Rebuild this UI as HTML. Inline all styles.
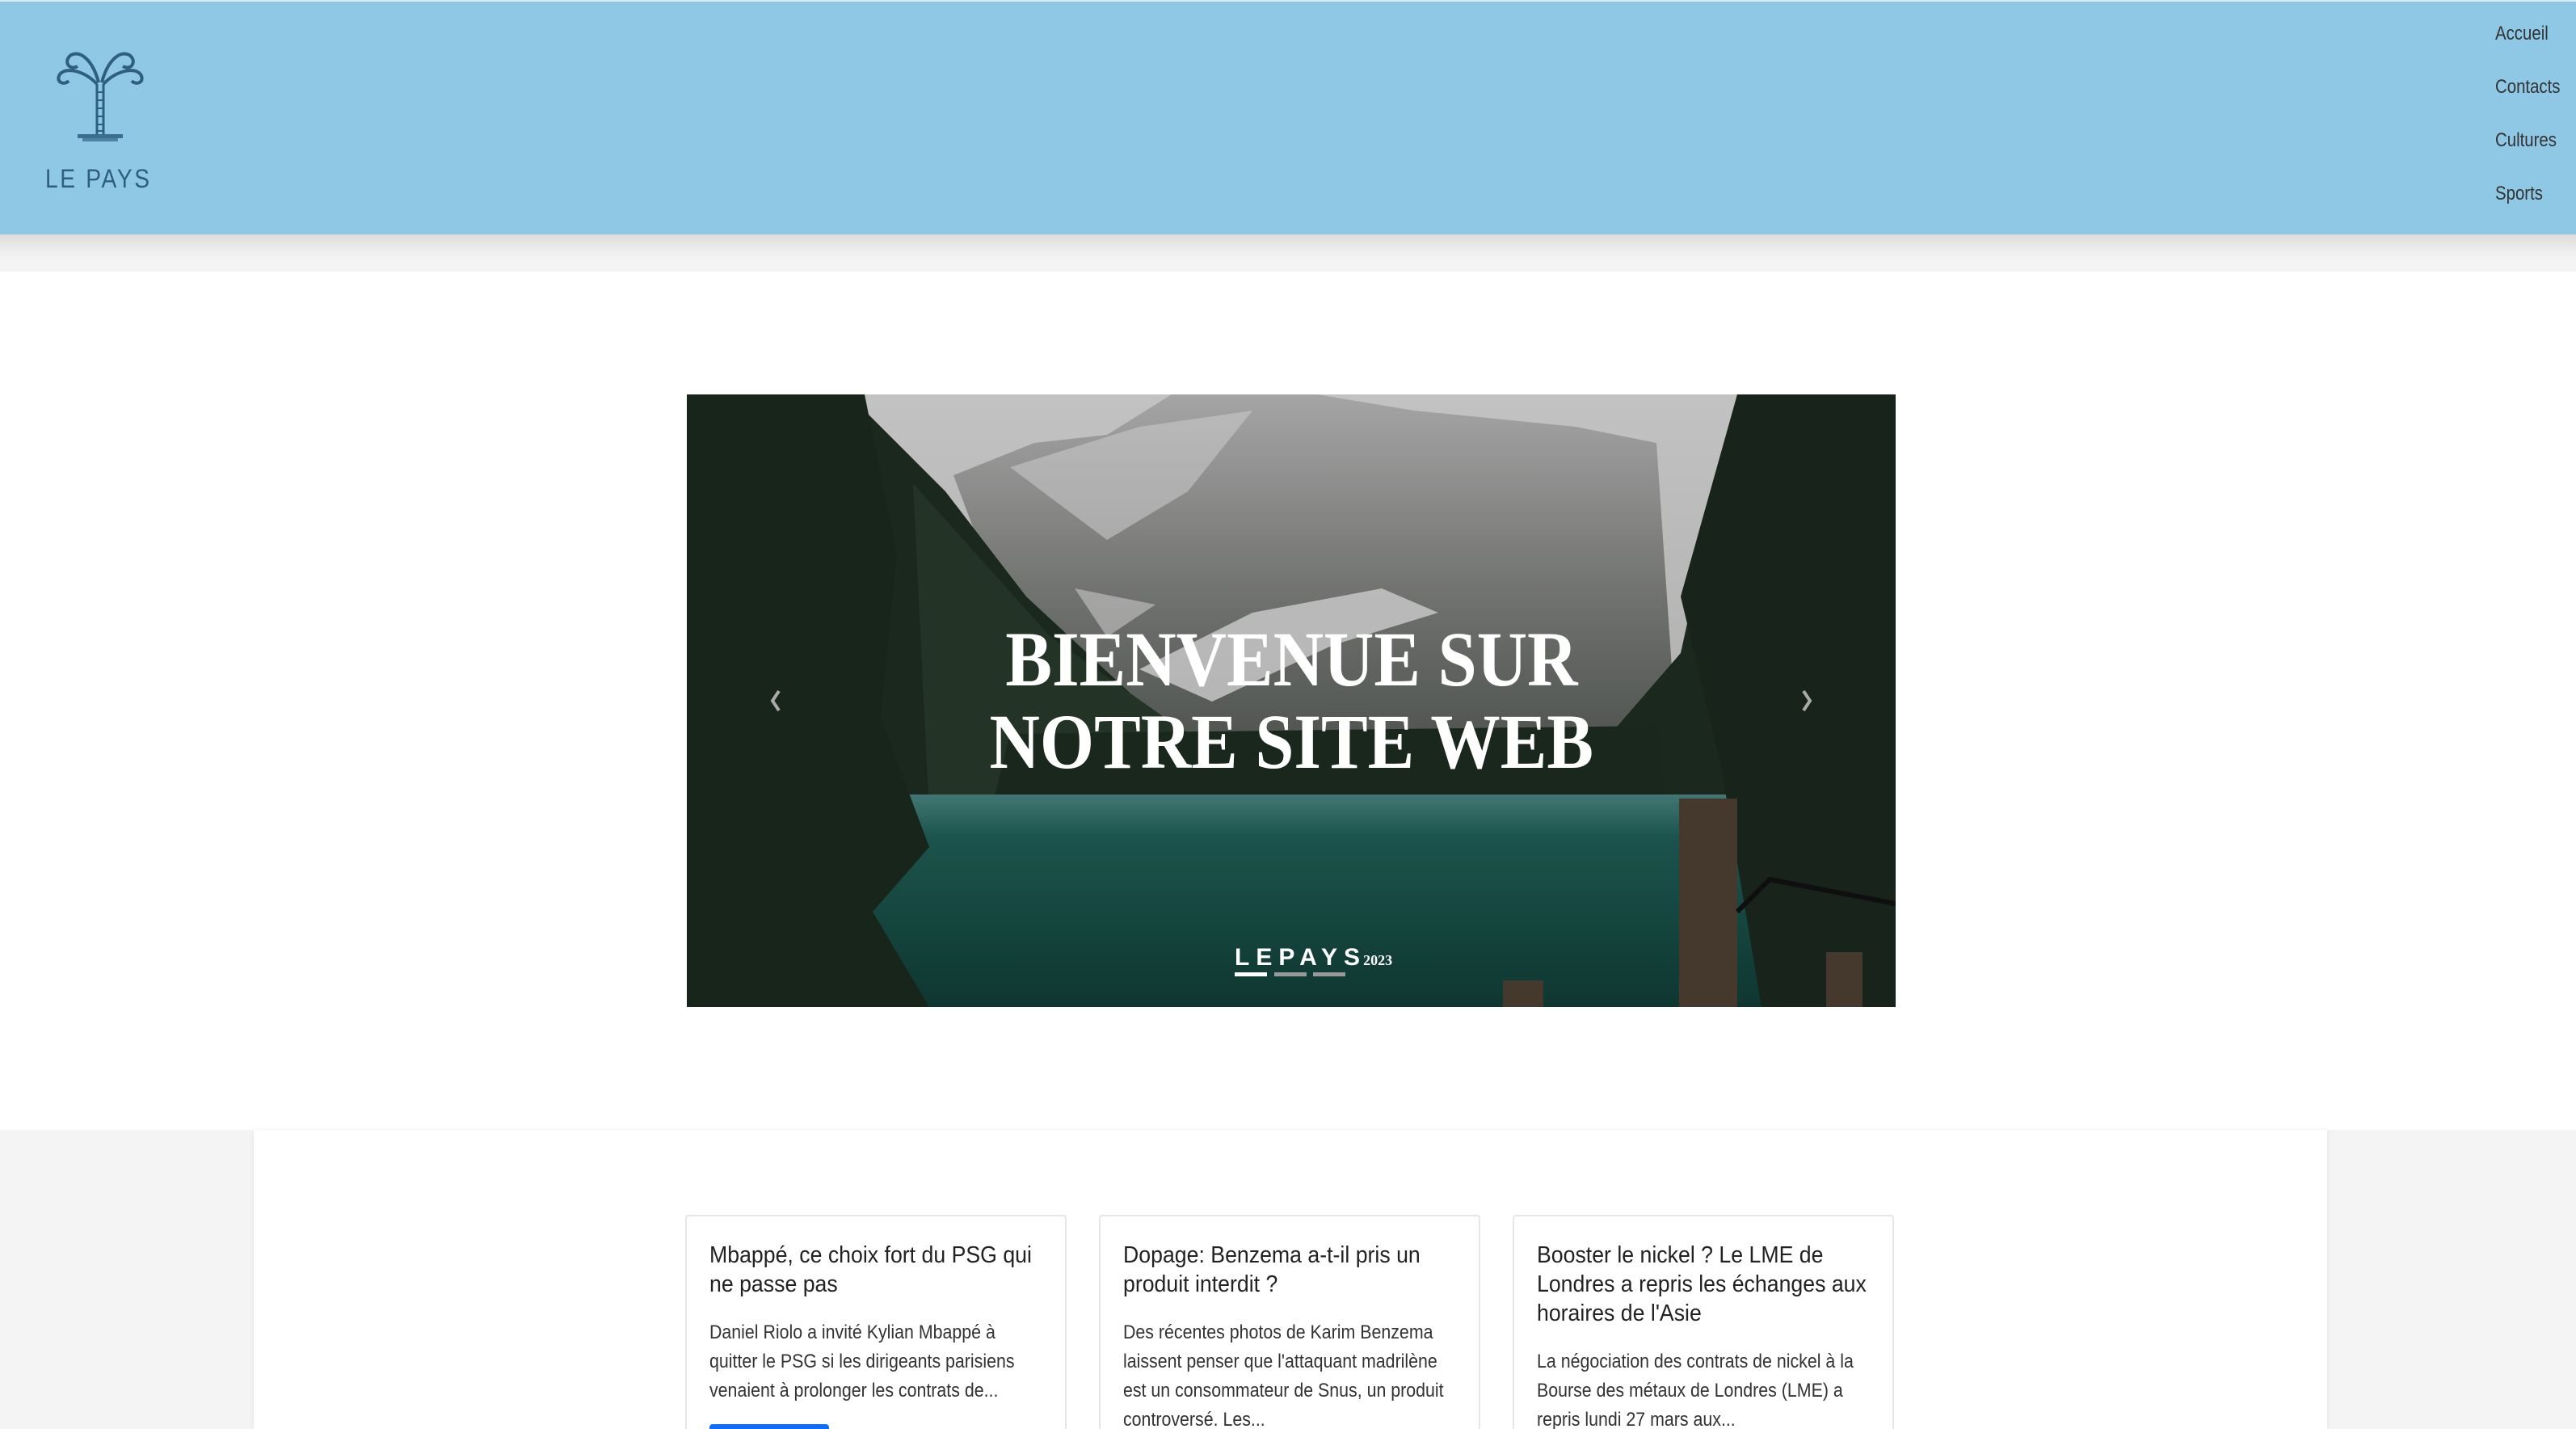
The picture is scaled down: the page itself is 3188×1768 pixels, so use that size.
<!DOCTYPE html>
<html style="overflow:hidden;height:1768px"><head><meta charset="utf-8"><style>
*{margin:0;padding:0;box-sizing:border-box}
body{width:3188px;height:1768px;overflow:hidden;background:#fff;font-family:"Liberation Sans",sans-serif;position:relative}
.hdr{position:absolute;left:0;top:0;width:3188px;height:290px;background:#8fc8e5;border-top:2px solid #d8ecf6}
.band{position:absolute;left:0;top:290px;width:3188px;height:46px;background:linear-gradient(#dcdcdc,#f3f3f3 60%,#f4f4f4)}
.nav{position:absolute;left:3088px;font-size:24px;color:#333;transform:scaleX(.85);transform-origin:left}
.logo-t{position:absolute;left:56px;top:203px;font-size:32px;letter-spacing:3px;color:#2f5f7d;transform:scaleX(.88);transform-origin:left}
.hero{position:absolute;left:850px;top:488px;width:1496px;height:758px;overflow:hidden;background:#2a3a30}
.t{position:absolute;left:0;width:1496px;text-align:center;color:#fff;font-family:"Liberation Serif",serif;font-weight:bold;font-size:96px;line-height:100px}
.t span{display:inline-block;transform:scaleX(.9)}
.grey{position:absolute;left:0;top:1398px;width:3188px;height:370px;background:#f4f4f4}
.cont{position:absolute;left:314px;top:1398px;width:2566px;height:370px;background:#fff;box-shadow:0 0 6px rgba(0,0,0,.08)}
.card{position:absolute;top:1503px;width:472px;height:265px;border:2px solid #e6e6e6;border-bottom:none;border-radius:4px 4px 0 0;background:#fff}
.in{position:absolute;left:28px;top:30px;color:#222;white-space:nowrap}
.ti{font-size:29px;line-height:36px;color:#222;transform:scaleX(.92);transform-origin:left top}
.bd{font-size:24px;line-height:36px;margin-top:24px;color:#333;transform:scaleX(.89);transform-origin:left top}
</style></head><body>
<div class="hdr"></div>
<div class="band"></div>
<svg style="position:absolute;left:60px;top:50px" width="130" height="135" viewBox="0 0 130 135">
<g fill="none" stroke="#2f5f7d" stroke-width="4">
<path d="M62 52 C55 25 40 12 28 18 C18 25 25 38 36 32"/>
<path d="M66 52 C73 25 88 12 100 18 C110 25 103 38 92 32"/>
<path d="M60 54 C45 38 22 32 14 42 C8 52 20 56 25 50"/>
<path d="M68 54 C83 38 106 32 114 42 C120 52 108 56 103 50"/>
<path d="M60 54 L60 118 M68 54 L68 118" stroke-width="3"/>
<path d="M60 64H68M60 74H68M60 84H68M60 94H68M60 104H68M60 112H68" stroke-width="2"/>
</g>
<rect x="36" y="116" width="56" height="5" fill="#3b6e8f"/>
<rect x="42" y="121" width="44" height="4" fill="#4d82a3"/>
</svg>
<div class="logo-t">LE PAYS</div>
<div class="nav" style="top:28px">Accueil</div>
<div class="nav" style="top:94px">Contacts</div>
<div class="nav" style="top:160px">Cultures</div>
<div class="nav" style="top:226px">Sports</div>

<div class="hero">
<svg width="1496" height="758" viewBox="0 0 1496 758" preserveAspectRatio="none" style="position:absolute;left:0;top:0">
<defs>
<linearGradient id="sky" x1="0" y1="0" x2="0" y2="1"><stop offset="0" stop-color="#d8d8d8"/><stop offset="1" stop-color="#b5b6b4"/></linearGradient>
<linearGradient id="lake" x1="0" y1="0" x2="0" y2="1"><stop offset="0" stop-color="#4a8580"/><stop offset=".2" stop-color="#1f5e56"/><stop offset="1" stop-color="#113d36"/></linearGradient>
<linearGradient id="mt" x1="0" y1="0" x2="0" y2="1"><stop offset="0" stop-color="#b8b8b8"/><stop offset=".5" stop-color="#7d7f7c"/><stop offset="1" stop-color="#4c514c"/></linearGradient>
</defs>
<rect width="1496" height="758" fill="url(#sky)"/>
<path d="M330 100 L430 60 L520 50 L600 0 L780 0 L900 20 L1000 30 L1100 40 L1200 60 L1230 500 L480 500 Z" fill="url(#mt)"/>
<path d="M400 90 L560 40 L700 20 L620 120 L520 180Z" fill="#e0e0e0" opacity=".6"/>
<path d="M560 340 L700 270 L860 240 L930 270 L800 310 L650 380Z" fill="#e4e4e4" opacity=".8"/>
<path d="M480 240 L580 260 L520 300Z" fill="#ddd" opacity=".6"/>
<path d="M200 0 L320 120 L420 250 L560 380 L700 470 L1100 470 L1230 320 L1300 0 L1496 0 L1496 758 L0 758 L0 0Z" fill="#1e2d22"/>
<path d="M280 110 L450 300 L620 420 L720 480 L300 520Z" fill="#27392b"/>
<path d="M400 420 L1200 410 L1210 500 L380 500Z" fill="#1c2c20"/>
<rect x="0" y="495" width="1496" height="263" fill="url(#lake)"/>
<path d="M0 0 L220 0 L260 200 L240 400 L300 560 L230 640 L300 758 L0 758Z" fill="#1b2a1f"/>
<path d="M1496 0 L1300 0 L1230 250 L1280 460 L1330 758 L1496 758Z" fill="#1a281f"/>
<rect x="1228" y="500" width="72" height="258" fill="#4d4033"/>
<rect x="1010" y="725" width="50" height="33" fill="#4d4033"/>
<rect x="1410" y="690" width="45" height="68" fill="#4d4033"/>
<path d="M1300 640 L1340 600 L1496 630" stroke="#111" stroke-width="6" fill="none"/>
<rect x="0" y="0" width="1496" height="758" fill="#000" opacity=".1"/>
</svg>
<div class="t" style="top:278px"><span>BIENVENUE SUR</span></div>
<div class="t" style="top:380px"><span>NOTRE SITE WEB</span></div>
<svg style="position:absolute;left:102px;top:364px" width="16" height="30"><path d="M12 3 L4 15 L12 27" stroke="#aaa" stroke-width="4" fill="none"/></svg>
<svg style="position:absolute;left:1378px;top:364px" width="16" height="30"><path d="M4 3 L12 15 L4 27" stroke="#aaa" stroke-width="4" fill="none"/></svg>
<div style="position:absolute;left:678px;top:680px;color:#fff;font-size:30px;font-weight:bold;letter-spacing:8px">LEPAYS<span style="font-family:'Liberation Serif',serif;font-size:18px;letter-spacing:0;margin-left:-4px">2023</span></div>
<div style="position:absolute;left:678px;top:715px;width:40px;height:5px;background:#fff"></div>
<div style="position:absolute;left:727px;top:715px;width:40px;height:5px;background:#999"></div>
<div style="position:absolute;left:775px;top:715px;width:40px;height:5px;background:#999"></div>
</div>

<div class="grey"></div>
<div class="cont"></div>
<div class="card" style="left:848px"><div class="in">
<div class="ti">Mbappé, ce choix fort du PSG qui<br>ne passe pas</div>
<div class="bd">Daniel Riolo a invité Kylian Mbappé à<br>quitter le PSG si les dirigeants parisiens<br>venaient à prolonger les contrats de...</div>
</div><div style="position:absolute;left:28px;top:257px;width:148px;height:10px;background:#0d6efd;border-radius:4px 4px 0 0"></div></div>
<div class="card" style="left:1360px"><div class="in">
<div class="ti">Dopage: Benzema a-t-il pris un<br>produit interdit ?</div>
<div class="bd">Des récentes photos de Karim Benzema<br>laissent penser que l'attaquant madrilène<br>est un consommateur de Snus, un produit<br>controversé. Les...</div>
</div></div>
<div class="card" style="left:1872px"><div class="in">
<div class="ti">Booster le nickel ? Le LME de<br>Londres a repris les échanges aux<br>horaires de l'Asie</div>
<div class="bd">La négociation des contrats de nickel à la<br>Bourse des métaux de Londres (LME) a<br>repris lundi 27 mars aux...</div>
</div></div>
</body></html>
